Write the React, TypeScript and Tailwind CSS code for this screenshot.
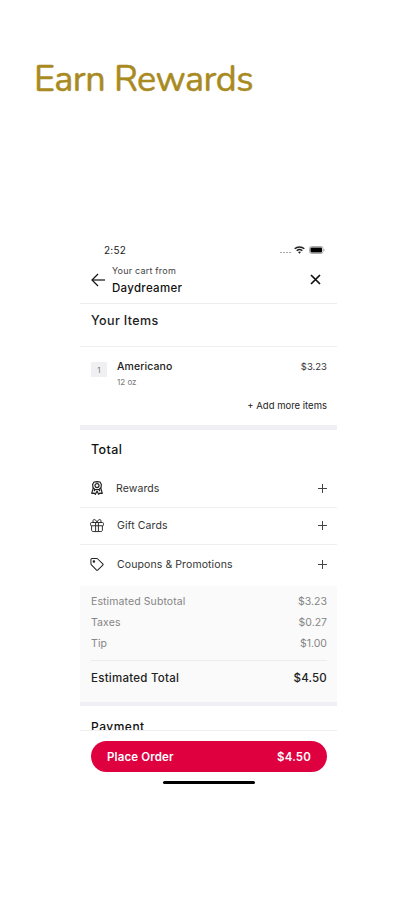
import React from 'react';

const extras = [
  { label: 'Rewards', icon: 'rewards' },
  { label: 'Gift Cards', icon: 'gift' },
  { label: 'Coupons & Promotions', icon: 'tag' },
];

const charges = [
  { label: 'Estimated Subtotal', amount: '$3.23' },
  { label: 'Taxes', amount: '$0.27' },
  { label: 'Tip', amount: '$1.00' },
];

function ExtraIcon({ name }: { name: string }) {
  if (name === 'rewards') {
    return (
      <svg width="12" height="14" viewBox="0 0 12 14" fill="none" stroke="#222" strokeWidth="1.2" strokeLinejoin="round">
        <path d="M3 1 6 .7l3 .3 1.400 2.500-.4 3L8.200 8.500H3.800L2 6.500l-.4-3Z" />
        <circle cx="6" cy="4.600" r="2" />
        <path d="M2.300 6.800.700 12.300l2.500-.2 1.200 1.200L6 10l1.600 3.300 1.200-1.200 2.500.2-1.600-5.500" />
        <path d="M3 10.200 4.300 8.600M9 10.200 7.700 8.600" />
      </svg>
    );
  }
  if (name === 'gift') {
    return (
      <svg width="15" height="15" viewBox="0 0 15 15" fill="none" stroke="#222" strokeWidth="1" strokeLinejoin="round">
        <rect x=".6" y="4.300" width="13.800" height="3.500" rx="1" />
        <path d="M1.700 7.800v4.500c0 1 .6 1.700 1.600 1.700h8.400c1 0 1.600-.7 1.600-1.700V7.800M6 4.500v9.300M9 4.500v9.300" />
        <path d="M7.500 4.300C6.800 2 5.500.800 4.200 1.200 2.500 1.700 2.800 4 4.300 4.300M7.500 4.300C8.200 2 9.500.800 10.800 1.200c1.700.5 1.400 2.800-.1 3.100" />
      </svg>
    );
  }
  return (
    <svg width="15" height="15" viewBox="0 0 15 15" fill="none" stroke="#222" strokeWidth="1.100" strokeLinejoin="round">
      <path d="M1 2.200v4.600c0 .4.200.8.500 1.100l5.300 5.300c.5.500 1.200.5 1.700 0l5.200-4.900c.4-.4.400-1 0-1.400L8.300 1.600C8 1.300 7.600 1.100 7.200 1.100H2.100C1.500 1.100 1 1.600 1 2.200Z" />
      <circle cx="4.200" cy="4.300" r=".8" fill="#222" />
    </svg>
  );
}

function StatusBar() {
  return (
    <div className="flex h-[22px] items-center justify-between pr-3 pl-6">
      <span className="text-[10px] tracking-[0.2px] text-[#222]">2:52</span>
      <div className="flex items-center">
        <svg width="12" height="8" viewBox="0 0 12 8" fill="#aaa">
          <path d="M1 6h2v1H1zM4 6h2v1H4zM7 6h2v1H7zM10 6h2v1h-2z" />
        </svg>
        <svg className="ml-[3px]" width="11" height="8" viewBox="0 0 11 8" fill="none" stroke="#222" strokeWidth="1.500">
          <path d="M.7 2.700C3.300.300 7.700.300 10.300 2.700M2.700 4.700c1.600-1.400 4-1.400 5.600 0" />
          <path d="m4 6 1.500 1.700L7 6C6.200 5.300 4.800 5.300 4 6Z" fill="#222" stroke="none" />
        </svg>
        <svg className="ml-1" width="16" height="8" viewBox="0 0 16 8">
          <rect x=".5" y=".5" width="13.500" height="7" rx="2" fill="#fff" stroke="#aaa" />
          <rect x="1.500" y="1.500" width="11.500" height="5" rx="1" fill="#000" />
          <path d="M15 3v2" stroke="#aaa" />
        </svg>
      </div>
    </div>
  );
}

export default function App() {
  return (
    <div className="h-[900px] w-[417px] overflow-hidden bg-white font-['Inter',sans-serif] text-[#222]">
      <h1 className="ml-[34px] flex h-[239px] items-start pt-[60px] font-['Nunito','Lato',sans-serif] text-[36px] leading-10 font-normal tracking-[-0.5px] whitespace-nowrap text-[#a98a22] [-webkit-text-stroke:0.5px_#a98a22]">
        Earn Rewards
      </h1>

      <div className="ml-20 w-[257px]">
        <StatusBar />

        {/* Cart header */}
        <header className="flex h-[43px] items-center border-b border-[#ededef] pr-[16px] pb-[5px] pl-[11px]">
          <svg width="14" height="14" viewBox="0 0 14 14" fill="none" stroke="#111" strokeWidth="1.200">
            <path d="M7 1 1 7l6 6" />
            <path d="M1 7h13" />
          </svg>
          <div className="ml-[7px] flex-1">
            <p className="h-[16px] text-[9px] leading-[14px] tracking-[0.2px] whitespace-nowrap text-[#444]">Your cart from</p>
            <p className="text-[11.5px] leading-4 font-medium tracking-[0.3px] whitespace-nowrap text-[#111]">Daydreamer</p>
          </div>
          <svg width="11" height="11" viewBox="0 0 11 11" stroke="#111" strokeWidth="1.700">
            <path d="m1 1 9 9M10 1l-9 9" />
          </svg>
        </header>

        {/* Items */}
        <h2 className="flex h-[43px] items-center border-b border-[#efeff1] pb-[8px] pl-[11px] text-[12.5px] font-medium tracking-[0.4px]">
          Your Items
        </h2>
        <div className="flex h-[48px] items-start pt-[11px] pr-[10px] pl-[11px]">
          <span className="mt-[4px] flex h-[15px] w-4 items-center justify-center bg-[#f0f0f2] text-[8px] text-[#777]">1</span>
          <div className="ml-[10px] flex-1">
            <p className="text-[10.5px] leading-[17px] font-medium tracking-[0.1px]">Americano</p>
            <p className="text-[8px] leading-[15px] text-[#777]">12 oz</p>
          </div>
          <span className="text-[9.5px] leading-[17px] text-[#333]">$3.23</span>
        </div>
        <p className="h-[30px] pr-[10px] text-right text-[9.5px] leading-[21px] whitespace-nowrap text-[#222]">+ Add more items</p>
        <div className="h-[5px] bg-[#efeff4]"></div>

        {/* Extras */}
        <h2 className="flex h-[40px] items-center pt-px pl-[11px] text-[12.5px] font-medium tracking-[0.4px] text-[#111]">Total</h2>
        {extras.map((extra, index) => (
          <div
            key={extra.label}
            className={`flex items-center pr-[10px] pl-[10px] text-[10.5px] tracking-[0.1px] text-[#333] ${index < 2 ? 'h-[37.5px] border-b border-[#efeff0]' : 'h-[41px] pb-[3px]'}`}
          >
            <span className={`flex justify-center ${index === 0 ? 'w-[13px]' : 'w-[14px]'}`}>
              <ExtraIcon name={extra.icon} />
            </span>
            <span className="ml-[13px] flex-1 pt-px whitespace-nowrap">{extra.label}</span>
            <svg width="9" height="9" viewBox="0 0 9 9" stroke="#444">
              <path d="M0 4.500h9M4.500 0v9" />
            </svg>
          </div>
        ))}

        {/* Price breakdown */}
        <div className="h-[116px] bg-[#fafafa] pt-[5px] pr-[10px] pl-[11px]">
          {charges.map((charge) => (
            <div key={charge.label} className="flex h-[21px] items-center justify-between text-[10.5px] text-[#858585]">
              <span className="tracking-[0.1px]">{charge.label}</span>
              <span>{charge.amount}</span>
            </div>
          ))}
          <div className="mt-[6px] flex h-[36px] items-center justify-between border-t border-[#ececee] text-[11.5px] font-medium text-[#222]">
            <span className="tracking-[0.25px]">Estimated Total</span>
            <span className="tracking-[0.2px]">$4.50</span>
          </div>
        </div>
        <div className="h-[4px] bg-[#efeff6]"></div>

        <div className="h-[25px] overflow-hidden border-b border-[#efeff1] pl-[11px]">
          <h2 className="pt-[12px] text-[12px] leading-[18px] font-medium tracking-[0.5px] text-[#111]">Payment</h2>
        </div>

        {/* Checkout */}
        <button className="mt-[10px] ml-[11px] flex h-[31px] w-[236px] items-center justify-between rounded-full bg-[#df0040] px-4 pt-[2px] text-[11.5px] font-semibold tracking-[0.15px] text-white">
          <span>Place Order</span>
          <span>$4.50</span>
        </button>
        <div className="mt-[9px] ml-[83px] h-[3px] w-[92px] rounded-full bg-black"></div>
      </div>
    </div>
  );
}
